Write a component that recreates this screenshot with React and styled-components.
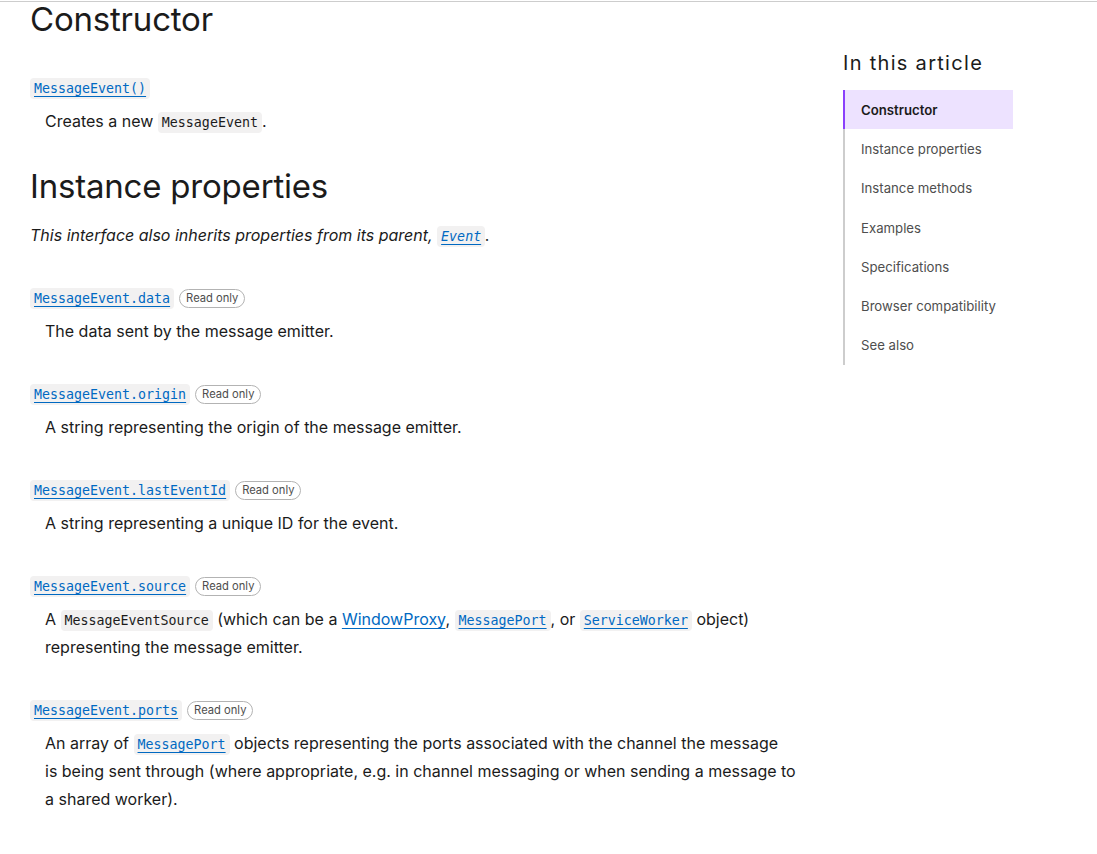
import React from 'react';
import styled, { createGlobalStyle } from 'styled-components';

const GlobalStyle = createGlobalStyle`
	body {
		margin: 0;
		background: #fff;
		font-family: Inter, "Noto Sans", sans-serif;
		color: #1b1b1b;
	}
`;

const Page = styled.div`
	width: 1097px;
	height: 854px;
	overflow: hidden;
	box-sizing: border-box;
	padding-top: 2px;
	position: relative;
	&::before {
		content: '';
		position: absolute;
		top: 1px;
		left: 0;
		right: 0;
		height: 1px;
		background: #cdcdcd;
	}
`;

const Layout = styled.div`
	display: flex;
	flex-direction: row;
	align-items: flex-start;
	padding-left: 30px;
	gap: 43px;
`;

const Main = styled.main`
	width: 770px;
	flex-shrink: 0;
`;

const Heading = styled.h2`
	margin: ${p => (p.$first ? '0' : '34px')} 0 0;
	font-size: 33px;
	font-weight: 400;
	line-height: 34px;
	letter-spacing: -0.2px;
	color: #1b1b1b;
`;

const Note = styled.p`
	margin: 18px 0 0;
	font-size: 16px;
	line-height: 28px;
	font-style: italic;
`;

const List = styled.dl`
	margin: ${p => p.$top || 0}px 0 0;
`;

const Term = styled.dt`
	margin-top: 34px;
	font-size: 16px;
	line-height: 28px;
	&:first-child {
		margin-top: 0;
	}
`;

const Desc = styled.dd`
	margin: 6px 0 0 15px;
	font-size: 16px;
	line-height: 28px;
`;

const Code = styled.code`
	font-family: "DejaVu Sans Mono", "Liberation Mono", monospace;
	font-size: 13.3px;
	line-height: 1;
	background: #f2f1f1;
	border-radius: 4px;
	padding: 3px 4px;
	color: #1b1b1b;
`;

const CodeLink = styled.a`
	font-family: "DejaVu Sans Mono", "Liberation Mono", monospace;
	font-size: 13.3px;
	line-height: 1;
	background: #f2f1f1;
	border-radius: 4px;
	padding: 3px 4px;
	color: #0069c2;
	text-decoration: underline;
	text-underline-offset: 3px;
	text-decoration-thickness: 1px;
	font-style: ${p => (p.$italic ? 'italic' : 'normal')};
`;

const Link = styled.a`
	color: #0069c2;
	text-decoration: underline;
	text-underline-offset: 3px;
`;

const Badge = styled.span`
	display: inline-flex;
	align-items: center;
	vertical-align: 1px;
	box-sizing: border-box;
	height: 19px;
	margin-left: 5px;
	padding: 0 6px;
	border: 1px solid #b3b3b3;
	border-radius: 10px;
	font-size: 11.2px;
	color: #4e4e4e;
	line-height: 1;
	font-weight: 400;
`;

const Aside = styled.aside`
	width: 170px;
	padding-top: 47px;
`;

const TocTitle = styled.h2`
	margin: 0 0 13px;
	font-size: 20px;
	font-weight: 400;
	letter-spacing: 1.3px;
	line-height: 28px;
	color: #1b1b1b;
`;

const TocList = styled.ul`
	list-style: none;
	margin: 0;
	padding: 0;
	border-left: 2px solid #cdcdcd;
`;

const TocItem = styled.li`
	margin-left: -2px;
	border-left: 2px solid ${p => (p.$active ? '#8b3ffc' : 'transparent')};
	background: ${p => (p.$active ? '#ede2ff' : 'transparent')};
	padding: 0 0 0 16px;
	height: 39.3px;
	display: flex;
	align-items: center;
	font-size: 13.2px;
	color: ${p => (p.$active ? '#1b1b1b' : '#4e4e4e')};
	font-weight: ${p => (p.$active ? 600 : 400)};
`;

const properties = [
	{ name: 'MessageEvent.data', text: 'The data sent by the message emitter.' },
	{ name: 'MessageEvent.origin', text: 'A string representing the origin of the message emitter.' },
	{ name: 'MessageEvent.lastEventId', text: 'A string representing a unique ID for the event.' },
	{
		name: 'MessageEvent.source',
		text: (
			<>
				A <Code>MessageEventSource</Code> (which can be a <Link href="#">WindowProxy</Link>,{' '}
				<CodeLink href="#">MessagePort</CodeLink>, or <CodeLink href="#">ServiceWorker</CodeLink> object)
				representing the message emitter.
			</>
		),
	},
	{
		name: 'MessageEvent.ports',
		text: (
			<>
				An array of <CodeLink href="#">MessagePort</CodeLink> objects representing the ports associated with
				the channel the message
				<br />
				is being sent through (where appropriate, e.g. in channel messaging or when sending a message to a
				shared worker).
			</>
		),
	},
];

const toc = [
	'Constructor',
	'Instance properties',
	'Instance methods',
	'Examples',
	'Specifications',
	'Browser compatibility',
	'See also',
];

const App = () => {
	return (
		<Page>
			<GlobalStyle />
			<Layout>
				<Main>
					<Heading $first>Constructor</Heading>
					<List $top={37}>
						<Term>
							<CodeLink href="#">MessageEvent()</CodeLink>
						</Term>
						<Desc>
							Creates a new <Code>MessageEvent</Code>.
						</Desc>
					</List>
					<Heading>Instance properties</Heading>
					<Note>
						This interface also inherits properties from its parent, <CodeLink href="#" $italic>Event</CodeLink>.
					</Note>
					<List $top={34}>
						{properties.map(prop => (
							<React.Fragment key={prop.name}>
								<Term>
									<CodeLink href="#">{prop.name}</CodeLink>
									<Badge>Read only</Badge>
								</Term>
								<Desc>{prop.text}</Desc>
							</React.Fragment>
						))}
					</List>
				</Main>
				<Aside>
					<TocTitle>In this article</TocTitle>
					<TocList>
						{toc.map((item, i) => (
							<TocItem key={item} $active={i === 0}>{item}</TocItem>
						))}
					</TocList>
				</Aside>
			</Layout>
		</Page>
	);
};

export default App;
